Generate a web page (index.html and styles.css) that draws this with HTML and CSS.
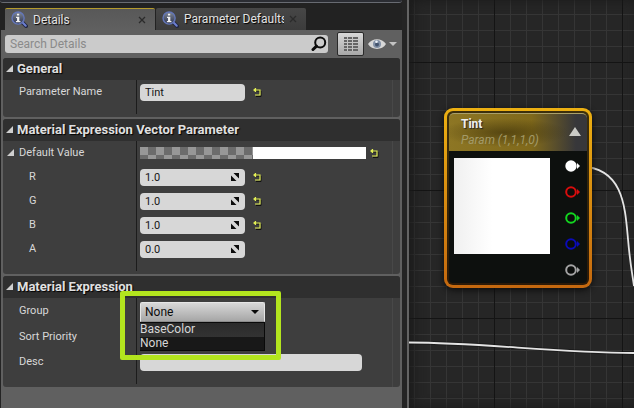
FILE: index.html
```html
<!DOCTYPE html>
<html lang="en">
<head>
<meta charset="utf-8">
<title>Material Editor</title>
<link rel="stylesheet" href="styles.css">
</head>
<body>
<svg class="defs" aria-hidden="true">
  <defs>
    <linearGradient id="lens" x1="0" y1="0" x2="0" y2="1">
      <stop offset="0" stop-color="#7f8793"/><stop offset="1" stop-color="#2c3350"/>
    </linearGradient>
    <symbol id="info" viewBox="0 0 18 18">
      <path d="M12 12l4 4" stroke="#20263f" stroke-width="4" stroke-linecap="round"/>
      <path d="M12 12l3.6 3.6" stroke="#6d7fd0" stroke-width="2.2" stroke-linecap="round"/>
      <circle cx="7.5" cy="7.5" r="6.4" fill="url(#lens)" stroke="#6376b8" stroke-width="1.5"/>
      <path d="M6.3 2.8h2.4v2H6.3zM5.3 6h3.5v4.5h1.2V12H5.2v-1.5h1.2v-3H5.3z" fill="#f2f2f2"/>
    </symbol>
    <symbol id="reset" viewBox="0 0 9 9">
      <path d="M2 3h6v5.500H3" fill="none" stroke="#111"/>
      <path d="M1 2h6v5H2M2.500 0v4" fill="none" stroke="#e3ef55" stroke-width="1.200"/>
      <path d="M0 2L2.500 0v4z" fill="#e3ef55"/>
    </symbol>
    <symbol id="spin" viewBox="0 0 8 8">
      <path d="M2.500 0H8v5.500zM0 2.500L5.500 8H0z" fill="#0c0c0c"/>
    </symbol>
    <symbol id="fold" viewBox="0 0 8 8"><path d="M7 0v7H0z" fill="#cfcfcf"/></symbol>
    <symbol id="close" viewBox="0 0 8 8"><path d="M1 1l6 6M7 1L1 7" stroke="#2b2b2b" stroke-width="1.300"/></symbol>
    <symbol id="pin" viewBox="0 0 16 12">
      <circle cx="6" cy="6" r="4.800" fill="#0b0d0b" stroke="currentColor" stroke-width="2"/>
      <path d="M12 3L15 6l-3 3z" fill="currentColor"/>
    </symbol>
    <symbol id="pin-on" viewBox="0 0 16 12">
      <circle cx="6" cy="6" r="5.700" fill="currentColor"/>
      <path d="M12 3L15 6l-3 3z" fill="currentColor"/>
    </symbol>
  </defs>
</svg>
<main class="editor">
  <section class="dock">
    <div class="upper-edge"></div>
    <nav class="tabs">
      <div class="tab tab-active">
        <svg class="tab-icon"><use href="#info"/></svg>
        <span class="tab-name">Details</span>
        <button class="tab-close" aria-label="Close Details"><svg><use href="#close"/></svg></button>
      </div>
      <div class="tab">
        <svg class="tab-icon"><use href="#info"/></svg>
        <span class="tab-name">Parameter Defaults</span>
        <button class="tab-close" aria-label="Close Parameter Defaults"><svg><use href="#close"/></svg></button>
      </div>
    </nav>
    <div class="panel">
      <div class="toolbar">
        <div class="search">
          <input type="search" placeholder="Search Details" aria-label="Search Details">
          <svg class="search-icon" viewBox="0 0 16 16"><circle cx="9.200" cy="6.500" r="5" fill="none" stroke="#0a0a0a" stroke-width="2"/><path d="M5.500 10.200L2 13.500" stroke="#0a0a0a" stroke-width="3" stroke-linecap="round"/></svg>
        </div>
        <button class="matrix" aria-label="Property matrix">
          <svg viewBox="0 0 14 14"><path d="M0 1h14M0 4h14M0 7h14M0 10h14M0 13h14" stroke="#656565" stroke-width="2"/><path d="M3.500 0v14M8.500 0v14" stroke="#c2c2c2"/></svg>
        </button>
        <button class="view" aria-label="View options">
          <svg class="eye" viewBox="0 0 18 12"><path d="M0 6C4-.5 14-.5 18 6 14 12.500 4 12.500 0 6z" fill="#d7d7d7"/><circle cx="9" cy="6" r="4" fill="#8290a6"/><circle cx="9" cy="6.500" r="2" fill="#44546e"/><circle cx="8.500" cy="3.800" r="1.300" fill="#eef3fa"/></svg>
          <svg class="view-arrow" viewBox="0 0 8 4"><path d="M0 0h8L4 4z" fill="#c4c4c4"/></svg>
        </button>
      </div>

      <section class="group">
        <h2><svg class="fold"><use href="#fold"/></svg>General</h2>
        <div class="rows">
          <div class="row"><label class="name" for="pname">Parameter Name</label>
            <div class="value"><div class="field"><input id="pname" value="Tint"></div><button class="reset" aria-label="Reset name"><svg><use href="#reset"/></svg></button></div></div>
        </div>
      </section>

      <section class="group">
        <h2><svg class="fold"><use href="#fold"/></svg>Material Expression Vector Parameter</h2>
        <div class="rows">
          <div class="row"><span class="name parent"><svg class="fold"><use href="#fold"/></svg>Default Value</span>
            <div class="value"><button class="color" aria-label="Default colour"><span class="checker"></span><span class="opaque"></span></button><button class="reset near" aria-label="Reset colour"><svg><use href="#reset"/></svg></button></div></div>
          <div class="row"><label class="name child" for="r">R</label>
            <div class="value"><div class="field"><input id="r" value="1.0"><svg class="spin"><use href="#spin"/></svg></div><button class="reset" aria-label="Reset R"><svg><use href="#reset"/></svg></button></div></div>
          <div class="row"><label class="name child" for="g">G</label>
            <div class="value"><div class="field"><input id="g" value="1.0"><svg class="spin"><use href="#spin"/></svg></div><button class="reset" aria-label="Reset G"><svg><use href="#reset"/></svg></button></div></div>
          <div class="row"><label class="name child" for="b">B</label>
            <div class="value"><div class="field"><input id="b" value="1.0"><svg class="spin"><use href="#spin"/></svg></div><button class="reset" aria-label="Reset B"><svg><use href="#reset"/></svg></button></div></div>
          <div class="row"><label class="name child" for="a">A</label>
            <div class="value"><div class="field"><input id="a" value="0.0"><svg class="spin"><use href="#spin"/></svg></div></div></div>
        </div>
      </section>

      <section class="group">
        <h2><svg class="fold"><use href="#fold"/></svg>Material Expression</h2>
        <div class="rows">
          <div class="row tall"><label class="name" for="grp">Group</label>
            <div class="value">
              <div class="combo">
                <select id="grp"><option>BaseColor</option><option selected>None</option></select>
                <svg class="combo-arrow" viewBox="0 0 8 4"><path d="M0 0h8L4 4z" fill="#0a0a0a"/></svg>
                <ul class="menu"><li>BaseColor</li><li class="current">None</li></ul>
              </div>
              <div class="marker"></div>
            </div></div>
          <div class="row tall"><span class="name">Sort Priority</span><div class="value"></div></div>
          <div class="row"><label class="name" for="desc">Desc</label>
            <div class="value"><div class="field wide"><input id="desc" value=""></div></div></div>
        </div>
      </section>
    </div>
  </section>

  <section class="graph">
    <svg class="wires" width="225" height="408" viewBox="0 0 225 408" fill="none">
      <path d="M0 342.500C75 342.500 145 353 225 353" stroke="#0c0c0c" stroke-width="4" opacity=".4"/>
      <path d="M0 342.500C75 342.500 145 353 225 353" stroke="#e4e4e4" stroke-width="1.800"/>
      <path d="M172 166.500C214 168 216 206 219 239 221 263 223 272 225 286" stroke="#e4e4e4" stroke-width="1.800"/>
    </svg>
    <article class="node">
      <div class="node-inner">
        <header>
          <div><h3>Tint</h3><p>Param (1,1,1,0)</p></div>
          <button class="collapse" aria-label="Collapse preview"><svg viewBox="0 0 12 9"><path d="M6 0l6 9H0z" fill="#cbcbc6"/></svg></button>
        </header>
        <div class="node-body">
          <div class="preview"></div>
          <div class="pins">
            <svg class="pin white"><use href="#pin-on"/></svg>
            <svg class="pin red"><use href="#pin"/></svg>
            <svg class="pin green"><use href="#pin"/></svg>
            <svg class="pin blue"><use href="#pin"/></svg>
            <svg class="pin gray"><use href="#pin"/></svg>
          </div>
        </div>
      </div>
    </article>
  </section>
</main>
</body>
</html>
```
FILE: styles.css
```css
* { box-sizing: border-box; }
body {
  margin: 0;
  background: #242424;
  color: #d8d8d8;
  font: 12px/16px Roboto, "Liberation Sans", sans-serif;
}
button, input, select { font: inherit; margin: 0; padding: 0; border: 0; }
button { background: none; display: flex; align-items: center; justify-content: center; }
svg { display: block; flex: none; }
h2, h3, p, ul { margin: 0; padding: 0; }
.defs { position: absolute; width: 0; height: 0; }

.editor { display: grid; grid-template-columns: 402fr 5px 227fr; min-height: 100vh; }

.dock { display: flex; flex-direction: column; min-width: 0; }
.upper-edge { height: 3px; background: #2b2d33; border-bottom: 1px solid #686b72; border-radius: 0 0 3px 3px; }
.tabs { display: flex; gap: 1px; padding: 5px 4px 0 5px; background: #222; }
.tab {
  display: flex; align-items: center; flex: 0 1 150px; min-width: 0; height: 22px;
  padding: 0 9px 0 6px; gap: 5px;
  background: linear-gradient(#474747, #3c3c3c);
  border-radius: 2px 2px 0 0; color: #e2e2e2;
  text-shadow: 1px 1px 1px #000;
}
.tab-active { background: linear-gradient(#585858, #606060); border-top: 1px solid #b59b2c; }
.tab-icon { width: 17px; height: 17px; }
.tab-name { flex: 1; min-width: 0; overflow: hidden; white-space: nowrap; }
.tab-close svg { width: 8px; height: 8px; }

.panel { flex: 1; margin-left: 1px; padding: 2px 2px 0; background: #606060; }
.toolbar { display: flex; align-items: center; height: 24px; margin-bottom: 2px; padding: 0 3px 0 2px; }
.search { display: flex; align-items: center; flex: 1; height: 18px; padding-right: 1px; background: #cbcbcb; border-radius: 3px; }
.search input { flex: 1; min-width: 0; height: 18px; padding-left: 5px; background: none; outline: 0; appearance: none; }
.search input::placeholder { color: #8a8a8a; opacity: 1; }
.search-icon { width: 16px; height: 16px; }
.matrix { width: 27px; height: 24px; margin: 0 4px 0 9px; border: 1px solid #2a2a2a; border-radius: 2px; background: linear-gradient(#d8d8d8, #a8a8a8); }
.matrix svg { width: 14px; height: 14px; }
.view { gap: 3px; }
.eye { width: 18px; height: 12px; }
.view-arrow { width: 8px; height: 4px; }

.group { margin-bottom: 2px; background: #3e3e3e; border-radius: 3px; }
.group h2 {
  display: flex; align-items: center; height: 22px; padding-left: 3px; gap: 3px;
  background: #2f2f2f; border-radius: 3px 3px 0 0;
  font-size: 13px; font-weight: 700; color: #e0e0e0; text-shadow: 1px 1px 1px #000;
}
.fold { width: 8px; height: 8px; }
.rows {
  padding-bottom: 13px; font-size: 11px;
  background:
    linear-gradient(#1c1c1c, #1c1c1c) 133px 0 / 1px calc(100% - 3px) no-repeat,
    linear-gradient(#484848, #484848) calc(100% - 7px) 0 / 1px 100% no-repeat;
}
.row { display: grid; grid-template-columns: 133px 1fr; align-items: center; height: 24px; }
.tall { height: 26px; }
.name { padding-left: 16px; white-space: nowrap; }
.parent { display: flex; align-items: center; gap: 4px; padding-left: 4px; }
.child { padding-left: 26px; }
.value { position: relative; display: flex; align-items: center; padding-left: 4px; min-width: 0; }
.field { display: flex; align-items: center; width: 105px; height: 17px; padding: 0 6px 0 5px; background: #d7d7d7; border-radius: 4px; }
.field input { flex: 1; min-width: 0; height: 17px; background: none; color: #161616; outline: 0; }
.wide { width: 222px; }
.spin { width: 8px; height: 8px; }
.reset { margin-left: 8px; }
.near { margin-left: 4px; }
.reset svg { width: 9px; height: 9px; }
.color { width: 226px; height: 12px; }
.color span { flex: 1; height: 12px; }
.checker { background: repeating-conic-gradient(#6c6c6c 0 25%, #979797 0 50%) 0 0 / 16px 16px; }
.opaque { background: #fff; }

.combo { position: relative; width: 125px; height: 20px; margin-top: 2px; font-size: 12px; }
.combo select {
  width: 100%; height: 20px; padding-left: 4px; appearance: none; outline: 0;
  border: 1px solid #e6e6e6; border-bottom-color: #8c8c8c; border-radius: 2px 2px 0 0;
  background: linear-gradient(#d8d8d8, #a6a6a6); color: #0c0c0c;
}
.combo-arrow { position: absolute; right: 6px; top: 8px; width: 8px; height: 4px; }
.menu {
  position: absolute; z-index: 1; top: 20px; left: 0; width: 100%; list-style: none;
  border: 1px solid #0a0a0a; border-left: 0; line-height: 13px; color: #d6d6d6;
  background: linear-gradient(#2b2b2b, #3a3a3a);
}
.menu li { height: 14px; }
.menu .current { height: 13px; background: #181818; }
.marker { position: absolute; z-index: 2; left: -16px; top: -9px; width: 161px; height: 69px; border: 5px solid #b3e51e; border-radius: 2px; }

.graph {
  grid-column: 3; position: relative; overflow: hidden; border-left: 2px solid #646464;
  background:
    linear-gradient(90deg, #141414 1px, transparent 1px) 85px 0 / 128px 128px,
    linear-gradient(#141414 1px, transparent 1px) 0 62px / 128px 128px,
    linear-gradient(90deg, #353535 1px, transparent 1px) 5px 0 / 16px 16px,
    linear-gradient(#353535 1px, transparent 1px) 0 14px / 16px 16px,
    #262626;
  box-shadow: inset 4px 0 12px #1a1a1a;
}
.wires { position: absolute; left: 0; top: 0; }
.node {
  position: absolute; left: 35px; top: 108px; width: 148px; padding: 3px;
  border-radius: 9px; background: linear-gradient(#ecb012, #c4680f);
  box-shadow: 0 2px 6px #0c0c0c;
}
.node-inner { padding: 2px; border-radius: 6px; background: linear-gradient(#3c2f0c, #2c1a08); }
.node header {
  display: flex; justify-content: space-between; align-items: center; height: 38px; padding: 0 6px 2px 12px;
  border-radius: 5px 5px 0 0; border-top: 1px solid #aaa06a;
  background:
    radial-gradient(ellipse at 40% 50%, rgba(48, 38, 6, .55), transparent 55%),
    linear-gradient(90deg, #8d7624, #80691b 60%, #37373a 92%);
}
.node h3 { font-size: 12px; line-height: 16px; font-weight: 700; color: #f0f0f0; text-shadow: 1px 1px 1px #222; }
.node p { font-size: 12px; line-height: 16px; font-style: italic; color: #a39a68; white-space: nowrap; }
.collapse svg { width: 12px; height: 9px; }
.node-body { display: flex; justify-content: space-between; height: 132px; padding: 7px 2px 0 5px; background: #0d100e; border-radius: 0 0 4px 4px; }
.preview { width: 96px; height: 96px; background: linear-gradient(90deg, #f0f0f0, #fff 40%); }
.pins { display: flex; flex-direction: column; gap: 14px; padding-top: 2px; width: 20px; }
.pin { width: 16px; height: 12px; }
.white { color: #fff; }
.red { color: #d90d0d; }
.green { color: #13d620; }
.blue { color: #0b0bb8; }
.gray { color: #a4a4a4; }
```
